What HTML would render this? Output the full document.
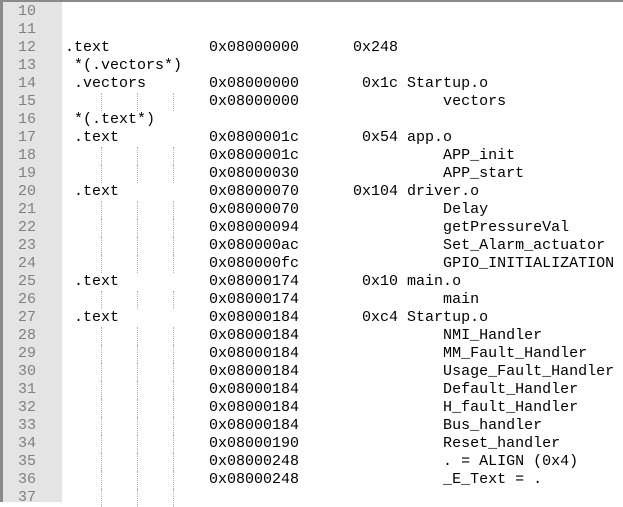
<!DOCTYPE html>
<html><head><style>
html,body{margin:0;padding:0;width:623px;height:502px;overflow:hidden;background:#fff}
#frame{position:absolute;left:0;top:0;width:623px;height:502px;border-top:2px solid #8a8a8a;border-left:3px solid #8a8a8a;box-sizing:border-box}
#gut{position:absolute;left:3px;top:2px;width:59px;height:500px;background:#e4e4e4}
.r{position:absolute;height:18px;line-height:18px;font-family:"Liberation Mono","Courier New",monospace;font-size:15px;white-space:pre;color:#000}
.n{left:3px;width:33px;text-align:right;color:#808080}
.t{left:65px}
.g{position:absolute;width:0;height:18px;border-left:1px dotted #b0b0b0}
</style></head><body>
<div id="frame"></div><div id="gut"></div>
<div id="c"></div>
<script>
var L=[
"","",
".text           0x08000000      0x248",
" *(.vectors*)",
" .vectors       0x08000000       0x1c Startup.o",
"\t\t\t\t0x08000000                vectors",
" *(.text*)",
" .text          0x0800001c       0x54 app.o",
"\t\t\t\t0x0800001c                APP_init",
"\t\t\t\t0x08000030                APP_start",
" .text          0x08000070      0x104 driver.o",
"\t\t\t\t0x08000070                Delay",
"\t\t\t\t0x08000094                getPressureVal",
"\t\t\t\t0x080000ac                Set_Alarm_actuator",
"\t\t\t\t0x080000fc                GPIO_INITIALIZATION",
" .text          0x08000174       0x10 main.o",
"\t\t\t\t0x08000174                main",
" .text          0x08000184       0xc4 Startup.o",
"\t\t\t\t0x08000184                NMI_Handler",
"\t\t\t\t0x08000184                MM_Fault_Handler",
"\t\t\t\t0x08000184                Usage_Fault_Handler",
"\t\t\t\t0x08000184                Default_Handler",
"\t\t\t\t0x08000184                H_fault_Handler",
"\t\t\t\t0x08000184                Bus_handler",
"\t\t\t\t0x08000190                Reset_handler",
"\t\t\t\t0x08000248                . = ALIGN (0x4)",
"\t\t\t\t0x08000248                _E_Text = .",
""];
var h="";
for(var i=0;i<L.length;i++){
 var y=3+18*i,s=L[i];
 h+='<div class="r n" style="top:'+y+'px">'+(10+i)+'</div>';
 if(s.indexOf("\t\t\t\t")==0){
  s="                "+s.slice(4);
  h+='<div class="g" style="left:101px;top:'+y+'px"></div><div class="g" style="left:137px;top:'+y+'px"></div><div class="g" style="left:173px;top:'+y+'px"></div>';
 }
 h+='<div class="r t" style="top:'+y+'px">'+s+'</div>';
}
h+='<div class="g" style="left:101px;top:'+(3+18*27)+'px"></div><div class="g" style="left:137px;top:'+(3+18*27)+'px"></div><div class="g" style="left:173px;top:'+(3+18*27)+'px"></div>';
document.getElementById("c").innerHTML=h;
</script>
</body></html>
